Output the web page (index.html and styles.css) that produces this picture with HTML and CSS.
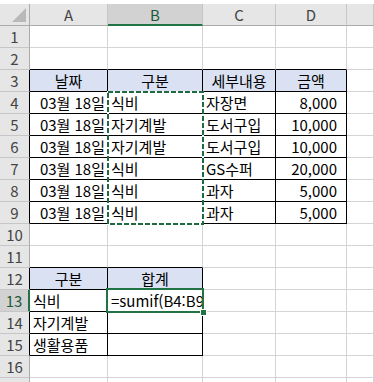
FILE: index.html
```html
<!DOCTYPE html>
<html lang="ko">
<head>
  <meta charset="UTF-8">
  <title>가계부</title>
  <link rel="stylesheet" href="styles.css">
</head>
<body>

  <!-- Sheet grid: row header column + columns A..E -->
  <div class="sheet">
    <!-- column headers -->
    <div class="cell corner">
      <svg width="14" height="14" viewBox="0 0 14 14"><polygon points="14,0 14,14 0,14" fill="#b9b9b9"/></svg>
    </div>
    <div class="cell col">A</div>
    <div class="cell col col-active">B</div>
    <div class="cell col">C</div>
    <div class="cell col">D</div>
    <div class="cell col"></div>

    <!-- 1 -->
    <div class="cell rh">1</div>
    <div class="cell"></div><div class="cell"></div><div class="cell"></div><div class="cell"></div><div class="cell"></div>

    <!-- 2 -->
    <div class="cell rh">2</div>
    <div class="cell bb"></div><div class="cell bb"></div><div class="cell bb"></div><div class="cell bb"></div><div class="cell"></div>

    <!-- 3: 지출 내역 머리글 -->
    <div class="cell rh br">3</div>
    <div class="cell tb th">날짜</div>
    <div class="cell tb th">구분</div>
    <div class="cell tb th">세부내용</div>
    <div class="cell tb th">금액</div>
    <div class="cell"></div>

    <div class="cell rh br">4</div>
    <div class="cell tb date">03월 18일</div>
    <div class="cell tb">식비</div>
    <div class="cell tb">자장면</div>
    <div class="cell tb num">8,000</div>
    <div class="cell"></div>

    <div class="cell rh br">5</div>
    <div class="cell tb date">03월 18일</div>
    <div class="cell tb">자기계발</div>
    <div class="cell tb">도서구입</div>
    <div class="cell tb num">10,000</div>
    <div class="cell"></div>

    <div class="cell rh br">6</div>
    <div class="cell tb date">03월 18일</div>
    <div class="cell tb">자기계발</div>
    <div class="cell tb">도서구입</div>
    <div class="cell tb num">10,000</div>
    <div class="cell"></div>

    <div class="cell rh br">7</div>
    <div class="cell tb date">03월 18일</div>
    <div class="cell tb">식비</div>
    <div class="cell tb">GS수퍼</div>
    <div class="cell tb num">20,000</div>
    <div class="cell"></div>

    <div class="cell rh br">8</div>
    <div class="cell tb date">03월 18일</div>
    <div class="cell tb">식비</div>
    <div class="cell tb">과자</div>
    <div class="cell tb num">5,000</div>
    <div class="cell"></div>

    <div class="cell rh br">9</div>
    <div class="cell tb date">03월 18일</div>
    <div class="cell tb">식비</div>
    <div class="cell tb">과자</div>
    <div class="cell tb num">5,000</div>
    <div class="cell"></div>

    <!-- 10, 11 -->
    <div class="cell rh">10</div>
    <div class="cell"></div><div class="cell"></div><div class="cell"></div><div class="cell"></div><div class="cell"></div>

    <div class="cell rh">11</div>
    <div class="cell bb"></div><div class="cell bb"></div><div class="cell"></div><div class="cell"></div><div class="cell"></div>

    <!-- 12: 구분별 합계 -->
    <div class="cell rh br">12</div>
    <div class="cell tb th">구분</div>
    <div class="cell tb th">합계</div>
    <div class="cell"></div><div class="cell"></div><div class="cell"></div>

    <div class="cell rh rh-active">13</div>
    <div class="cell tb">식비</div>
    <div class="cell tb">=sumif(B4:B9</div>
    <div class="cell"></div><div class="cell"></div><div class="cell"></div>

    <div class="cell rh br">14</div>
    <div class="cell tb">자기계발</div>
    <div class="cell tb"></div>
    <div class="cell"></div><div class="cell"></div><div class="cell"></div>

    <div class="cell rh br">15</div>
    <div class="cell tb">생활용품</div>
    <div class="cell tb"></div>
    <div class="cell"></div><div class="cell"></div><div class="cell"></div>

    <div class="cell rh">16</div>
    <div class="cell"></div><div class="cell"></div><div class="cell"></div><div class="cell"></div><div class="cell"></div>

    <div class="cell rh"></div>
    <div class="cell"></div><div class="cell"></div><div class="cell"></div><div class="cell"></div><div class="cell"></div>

    <!-- reference range B4:B9 (marching ants) -->
    <svg class="ants" width="97" height="134" viewBox="0 0 97 134">
      <rect x="1" y="1" width="95" height="132" fill="none" stroke="#fff" stroke-width="2"/>
      <rect x="1" y="1" width="95" height="132" fill="none" stroke="#1e6b41" stroke-width="2" stroke-dasharray="5 2"/>
    </svg>

    <!-- active cell B13 -->
    <div class="active-cell"><span class="fill-handle"></span></div>
  </div>

</body>
</html>
```

FILE: styles.css
```css
* {
  box-sizing: border-box;
}

body {
  margin: 0;
  background-color: #fff;
  font-family: "Noto Sans CJK KR", "Noto Sans", sans-serif;
  font-size: 15px;
  color: #000;
  overflow: hidden;
}

.sheet {
  position: relative;
  margin-top: 4px;
  display: grid;
  grid-template-columns: 30px 78px 95px 73px 71px 1fr;
  grid-auto-rows: 22px;
}

.cell {
  border-right: 1px solid #d4d4d4;
  border-bottom: 1px solid #d4d4d4;
  padding: 0 3px;
  line-height: 21px;
  white-space: nowrap;
}

/* headers */
.corner {
  background-color: #e6e6e6;
  border-right-color: #ababab;
  border-bottom-color: #ababab;
  display: flex;
  align-items: flex-end;
  justify-content: flex-end;
  padding: 0 3px 3px 0;
}

.col {
  background-color: #e6e6e6;
  border-right-color: #c6c6c6;
  border-bottom-color: #ababab;
  text-align: center;
  color: #444;
}

.col-active {
  background-color: #d2d2d2;
  border-bottom: 2px solid #217346;
  color: #1e5a38;
}

.rh {
  background-color: #e6e6e6;
  border-right-color: #ababab;
  border-bottom-color: #c6c6c6;
  text-align: center;
  color: #444;
  padding: 0;
}

.rh-active {
  background-color: #d2d2d2;
  border-right: 2px solid #217346;
  color: #1e5a38;
}

/* table borders */
.bb {
  border-bottom-color: #000;
}

.br {
  border-right-color: #000;
}

.tb {
  border-right-color: #000;
  border-bottom-color: #000;
}

.th {
  background-color: #d9e1f2;
  text-align: center;
}

.date {
  text-align: right;
  padding-right: 2px;
}

.num {
  text-align: right;
  padding-right: 9px;
}

/* overlays */
.ants {
  position: absolute;
  left: 107px;
  top: 87px;
}

.active-cell {
  position: absolute;
  left: 106px;
  top: 284px;
  width: 98px;
  height: 25px;
  border: 2px solid #217346;
}

.fill-handle {
  position: absolute;
  right: -5px;
  bottom: -5px;
  width: 7px;
  height: 7px;
  background-color: #217346;
  border: 1px solid #fff;
}
```
